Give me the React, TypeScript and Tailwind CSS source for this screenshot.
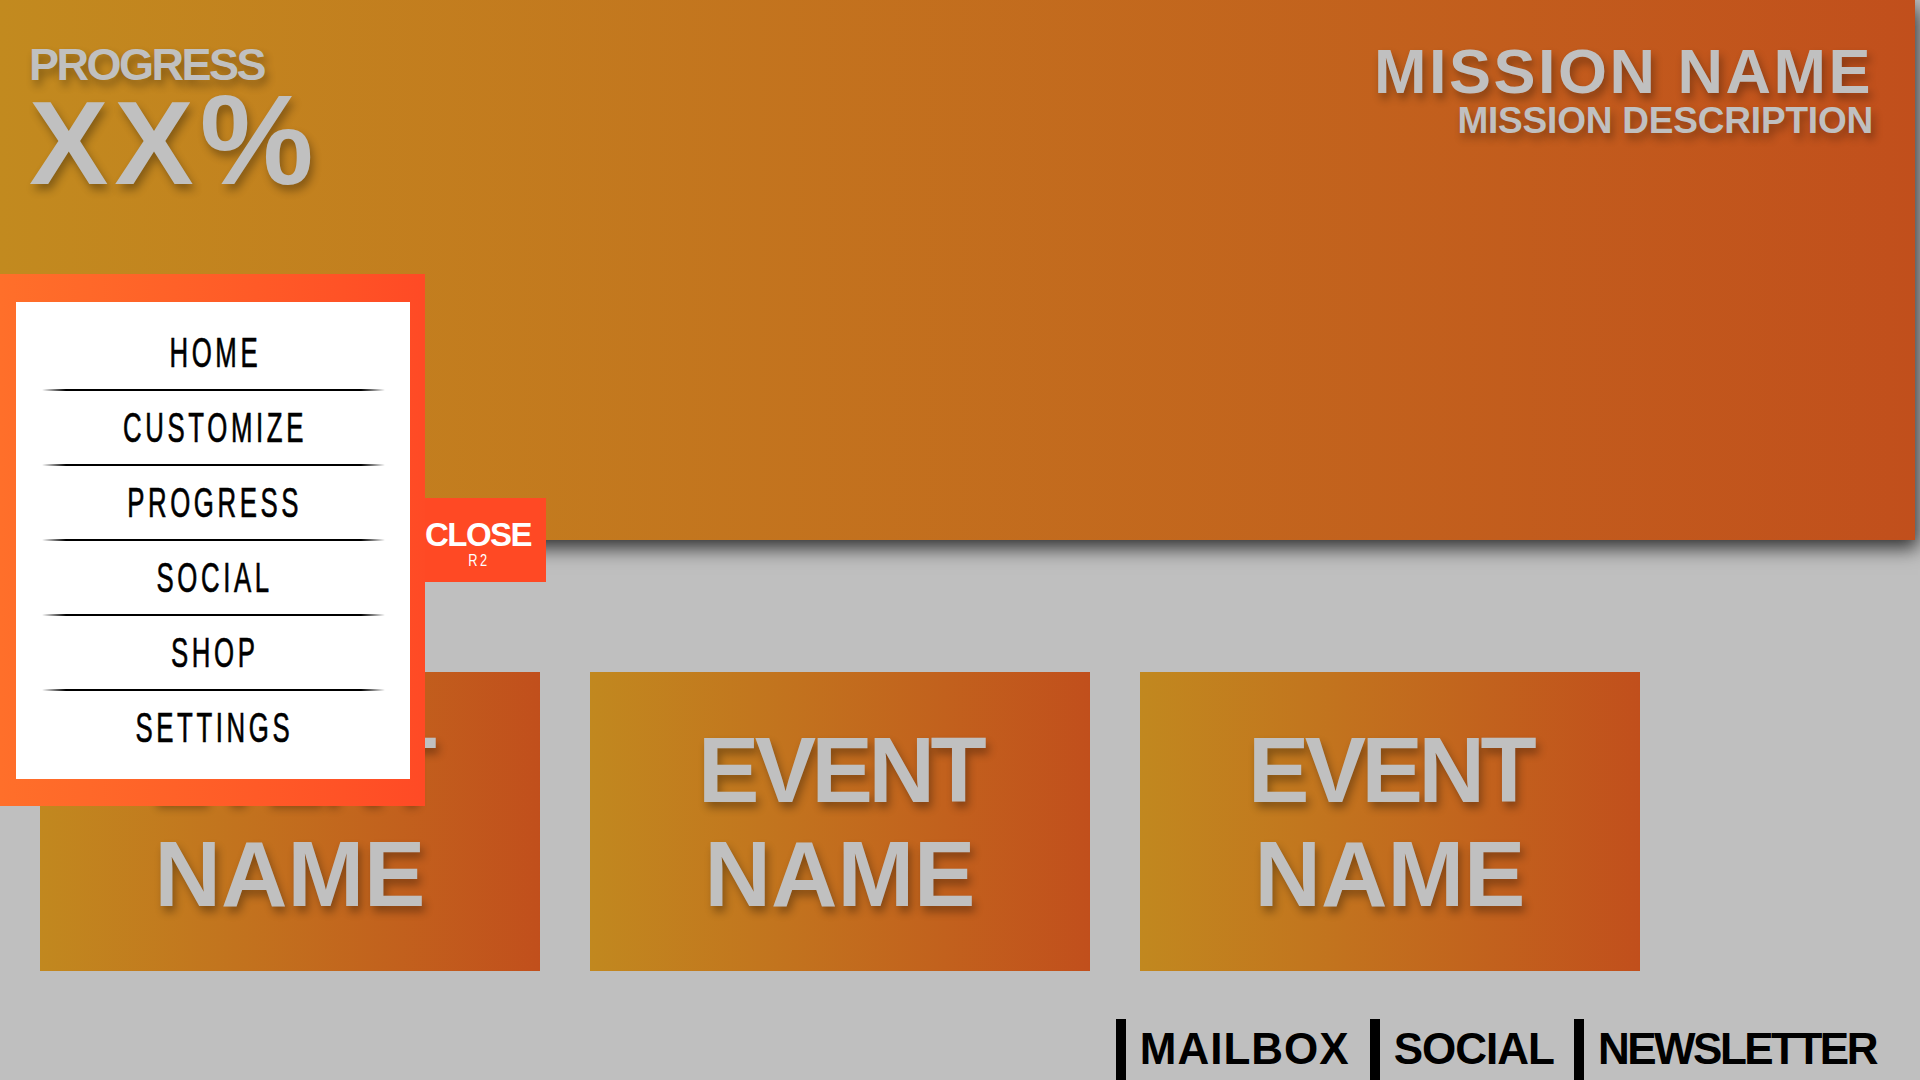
const menuItems = ['HOME', 'CUSTOMIZE', 'PROGRESS', 'SOCIAL', 'SHOP', 'SETTINGS'];
const footerLinks = [
    { label: 'MAILBOX', tracking: 'tracking-[1px]' },
    { label: 'SOCIAL', tracking: 'tracking-[-1px]' },
    { label: 'NEWSLETTER', tracking: 'tracking-[-2.5px]' },
];

const shadowText = '[text-shadow:3px_6px_8px_rgba(0,0,0,0.32)]';

const EventCard = () => (
    <div className="w-[500px] h-[299px] bg-linear-to-r from-[#c1881f] to-[#c14f1c] flex items-center justify-center">
        <div className={`text-center text-[92px] leading-[104px] font-bold text-[#c0c0c0] ${shadowText}`}>
            <div className="tracking-[-4.5px]">EVENT</div>
            <div className="tracking-[0px]">NAME</div>
        </div>
    </div>
);

export default function App() {
    return (
        <div
            className="relative w-full h-[1080px] overflow-hidden bg-[#bfbfbf]"
            style={{ fontFamily: '"Liberation Sans", Arial, sans-serif' }}
        >
            {/* header */}
            <header className="mr-[5px] h-[540px] bg-linear-to-r from-[#c28a1f] to-[#c14f1c] shadow-[3px_8px_18px_rgba(0,0,0,0.75)] flex justify-between pl-[29px] pr-[42px]">
                <div className={`pt-[42px] text-[#c0c0c0] font-bold ${shadowText}`}>
                    <div className="text-[45px] leading-none tracking-[-2.5px]">PROGRESS</div>
                    <div className="-mt-[11px] text-[119px] leading-none tracking-[6px]">
                        XX<span className="text-[128px]">%</span>
                    </div>
                </div>
                <div className={`pt-[40px] text-right text-[#c0c0c0] font-bold ${shadowText}`}>
                    <div className="text-[63px] leading-none tracking-[2.5px]">MISSION NAME</div>
                    <div className="-mt-[1px] text-[37px] leading-none tracking-[-0.2px]">MISSION DESCRIPTION</div>
                </div>
            </header>

            {/* events */}
            <div className="mt-[132px] pl-[40px] flex gap-[50px]">
                <EventCard />
                <EventCard />
                <EventCard />
            </div>

            {/* footer links */}
            <div className="mt-[48px] flex justify-end pr-[44px] gap-[20px]">
                {footerLinks.map(({ label, tracking }) => (
                    <div key={label} className="flex items-start">
                        <div className="w-[10px] h-[61px] bg-black" />
                        <div className={`ml-[14px] mt-[8px] text-[44px] leading-none font-bold text-black ${tracking}`}>
                            {label}
                        </div>
                    </div>
                ))}
            </div>

            {/* close tab */}
            <button className="absolute left-[410px] top-[498px] w-[136px] h-[84px] bg-[#ff4924] flex flex-col items-center pt-[20px] text-white">
                <span className="text-[33px] leading-none font-bold tracking-[-1.5px]">CLOSE</span>
                <span className="mt-[2px] text-[16px] leading-none tracking-[3px] pl-[3px] scale-x-[0.8]">R2</span>
            </button>

            {/* menu */}
            <nav className="absolute left-0 top-[274px] w-[425px] h-[532px] bg-linear-to-r from-[#ff6f2a] to-[#ff4a25] pl-[16px] pr-[15px] pt-[28px] pb-[27px]">
                <div className="h-full bg-white pt-[14px]">
                    {menuItems.map((item, i) => (
                        <div key={item}>
                            {i > 0 && (
                                <div className="ml-[26px] mr-[25px] h-[2px] rounded-full bg-[linear-gradient(to_right,transparent,black_7%,black_93%,transparent)]" />
                            )}
                            <div className="h-[73px] flex items-center justify-center">
                                <span className="inline-block pl-[6px] text-[43px] leading-none tracking-[6px] text-black scale-x-[0.6] [-webkit-text-stroke:0.7px_black]">
                                    {item}
                                </span>
                            </div>
                        </div>
                    ))}
                </div>
            </nav>
        </div>
    );
}
